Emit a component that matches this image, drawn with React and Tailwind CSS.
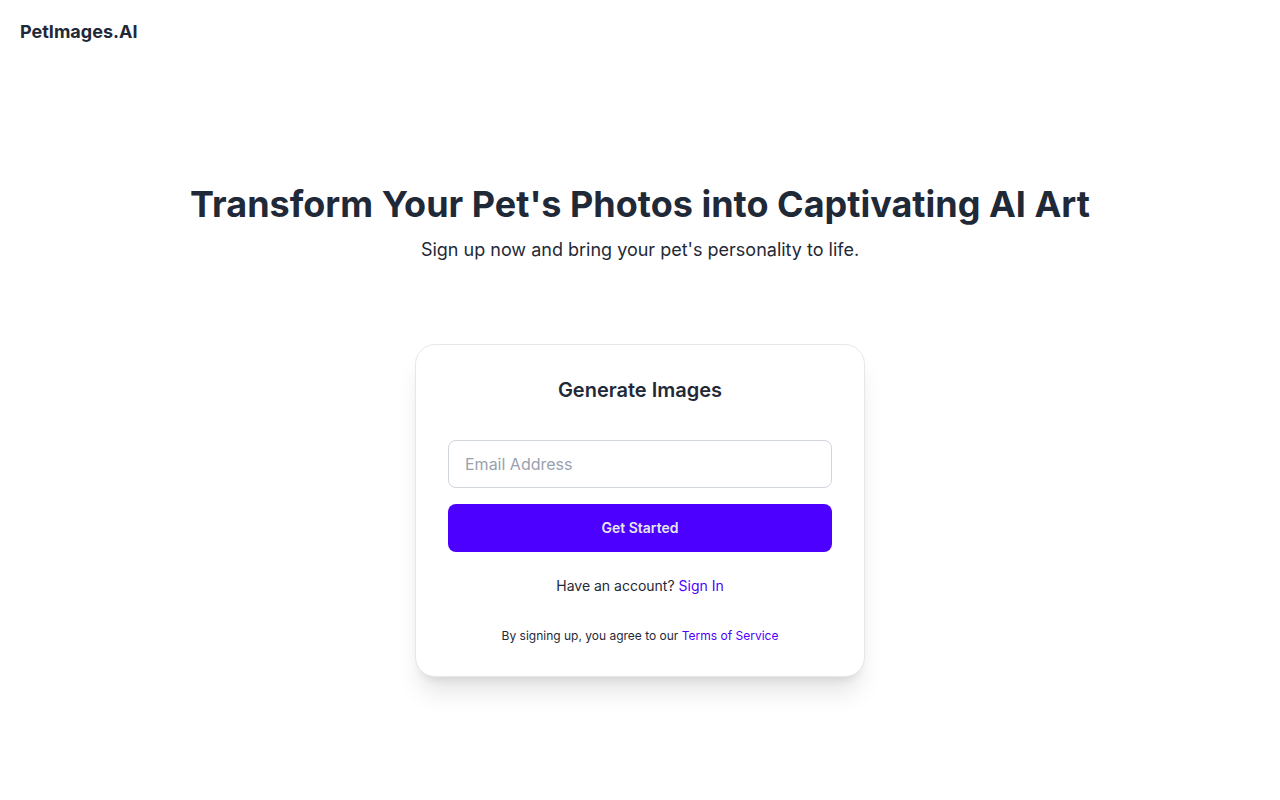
import React from 'react';

const App = () => {
  return (
    <div className="min-h-screen bg-white text-[#1f2937]" style={{ fontFamily: 'Inter, "Noto Sans", sans-serif' }}>
      <header className="px-5 pt-[18px]">
        <span className="text-lg leading-7 font-bold">PetImages.AI</span>
      </header>

      <main className="flex flex-col items-center pt-[138px]">
        <h1 className="text-4xl leading-10 font-bold">
          Transform Your Pet's Photos into Captivating AI Art
        </h1>
        <p className="mt-3 text-lg leading-7">Sign up now and bring your pet's personality to life.</p>

        <div className="mt-20 w-[450px] rounded-[20px] border border-gray-200 bg-white px-8 pt-[31px] pb-[32px] shadow-xl">
          <h2 className="text-center text-xl leading-7 font-semibold">Generate Images</h2>
          <input
            type="email"
            placeholder="Email Address"
            className="mt-9 block h-12 w-full rounded-lg border border-gray-300 px-4 text-base text-gray-800 placeholder:text-gray-400 outline-none"
          />
          <button className="mt-4 h-12 w-full rounded-lg bg-[#4c00ff] text-sm font-semibold text-gray-200">
            Get Started
          </button>
          <p className="mt-6 text-center text-sm leading-5">
            Have an account? <a className="text-[#4c00ff]">Sign In</a>
          </p>
          <p className="mt-8 text-center text-xs leading-4">
            By signing up, you agree to our <a className="text-[#4c00ff]">Terms of Service</a>
          </p>
        </div>
      </main>
    </div>
  );
};

export default App;
